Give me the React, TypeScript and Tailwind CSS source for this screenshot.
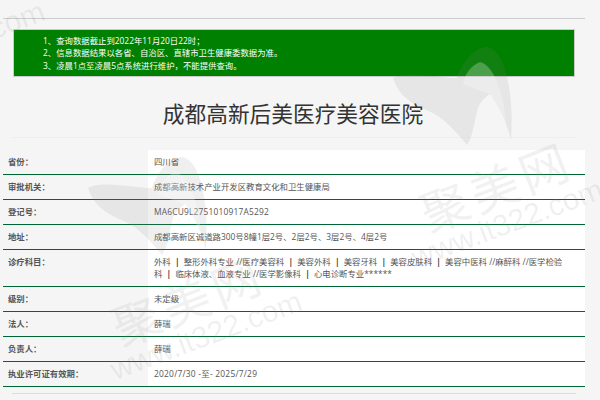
import React from 'react';

const FONT = "font-['Open_Sans','Noto_Sans_CJK_SC',sans-serif]";

function Sep() {
  return <span className="inline-block w-[13px] text-center font-bold text-[#444]">|</span>;
}

const ROWS: { label: string; value: React.ReactNode; track?: string }[] = [
  { label: '省份：', value: '四川省' },
  { label: '审批机关：', value: '成都高新技术产业开发区教育文化和卫生健康局' },
  { label: '登记号：', value: 'MA6CU9L2751010917A5292', track: 'tracking-[0.2px]' },
  { label: '地址：', value: '成都高新区诚道路300号8幢1层2号、2层2号、3层2号、4层2号' },
  {
    label: '诊疗科目：',
    value: (
      <>
        外科<Sep />整形外科专业 //医疗美容科<Sep />美容外科<Sep />美容牙科<Sep />美容皮肤科<Sep />美容中医科 //麻醉科 //医学检验科
        <Sep />临床体液、血液专业 //医学影像科<Sep />心电诊断专业******
      </>
    ),
  },
  { label: '级别：', value: '未定级' },
  { label: '法人：', value: '薛瑞' },
  { label: '负责人：', value: '薛瑞' },
  { label: '执业许可证有效期：', value: '2020/7/30 -至- 2025/7/29', track: 'tracking-[0.25px]' },
];

// tooth logo, drawn where it sits in the right hand tile
function Tooth({ dx, dy }: { dx: number; dy: number }) {
  return (
    <g transform={`translate(${dx} ${dy})`}>
      <path
        d="M393 78 C405 70 440 78 457 78 C462 62 475 47 487 47 C505 50 514 90 511 140 C506 120 498 105 490 94 C484 98 478 104 477 112 C474 125 472 138 467 145 C455 130 445 120 433 113 C418 106 400 100 393 78 Z"
        fill="#808080"
        fillOpacity="0.13"
      />
      <path
        d="M480 62 C470 66 464 76 463 84 C472 88 482 92 490 94 C497 104 504 118 506 126 C505 100 496 66 480 62 Z"
        fill="#ffffff"
        fillOpacity="0.25"
      />
    </g>
  );
}

function Brand({ x, y }: { x: number; y: number }) {
  return (
    <text
      x={0}
      y={0}
      transform={`translate(${x} ${y}) rotate(-21.5)`}
      textAnchor="middle"
      dominantBaseline="central"
      fontSize={48}
      letterSpacing={5}
      fill="#808080"
      fillOpacity="0.11"
      className="font-['Noto_Sans_CJK_SC',sans-serif]"
    >
      聚美网
    </text>
  );
}

function Site({ x, y }: { x: number; y: number }) {
  return (
    <text
      x={0}
      y={0}
      transform={`translate(${x} ${y}) rotate(-20.5)`}
      textAnchor="middle"
      dominantBaseline="central"
      fontSize={30}
      fill="#808080"
      fillOpacity="0.12"
      className="font-['Liberation_Sans',sans-serif]"
    >
      www.it322.com
    </text>
  );
}

export default function App() {
  return (
    <div className={`relative h-[400px] w-[600px] overflow-hidden bg-[#f5f5f5] ${FONT}`}>
      <div className="pt-[18px] pl-[3px] w-[585px]">
        <div className="h-px bg-[#ccc]" />
        <div className="mt-[10px] mx-[10px] h-[48px] border border-[#ccc] bg-[#008000] pl-[29px] pt-[5px] text-[8.4px] leading-[12.3px] text-white">
          <p>1、查询数据截止到2022年11月20日22时；</p>
          <p>2、信息数据结果以各省、自治区、直辖市卫生健康委数据为准。</p>
          <p>3、凌晨1点至凌晨5点系统进行维护，不能提供查询。</p>
        </div>
        <h1 className="mt-[22px] pr-[2px] text-center text-[21.7px] leading-[30px] text-[#333]">成都高新后美医疗美容医院</h1>
        <div className="mt-[8px] mx-[9px] h-px bg-[#eee]" />
        <div className="mt-[12px]">
          {ROWS.map((row) => (
            <div key={row.label} className="flex border-b border-[#006633]">
              <div className="w-[145px] shrink-0 py-[6px] pl-[5px] text-[8.4px] leading-[12px] font-semibold text-[#555]">
                {row.label}
              </div>
              <div className={`flex-1 bg-white py-[6px] pl-[6px] pr-[17px] text-[8.4px] leading-[12px] text-[#555] ${row.track ?? ''}`}>
                {row.value}
              </div>
            </div>
          ))}
        </div>
        <div className="mt-[6px] mx-[9px] h-px bg-[#ddd]" />
      </div>
      <svg viewBox="0 0 600 400" className="absolute inset-0 w-[600px] h-[400px] pointer-events-none">
        <Tooth dx={0} dy={0} />
        <Tooth dx={-305} dy={110} />
        <Brand x={495.5} y={184.5} />
        <Brand x={187.5} y={298.5} />
        <Site x={507} y={223} />
        <Site x={206} y={335} />
        <Site x={-51} y={45} />
      </svg>
    </div>
  );
}
